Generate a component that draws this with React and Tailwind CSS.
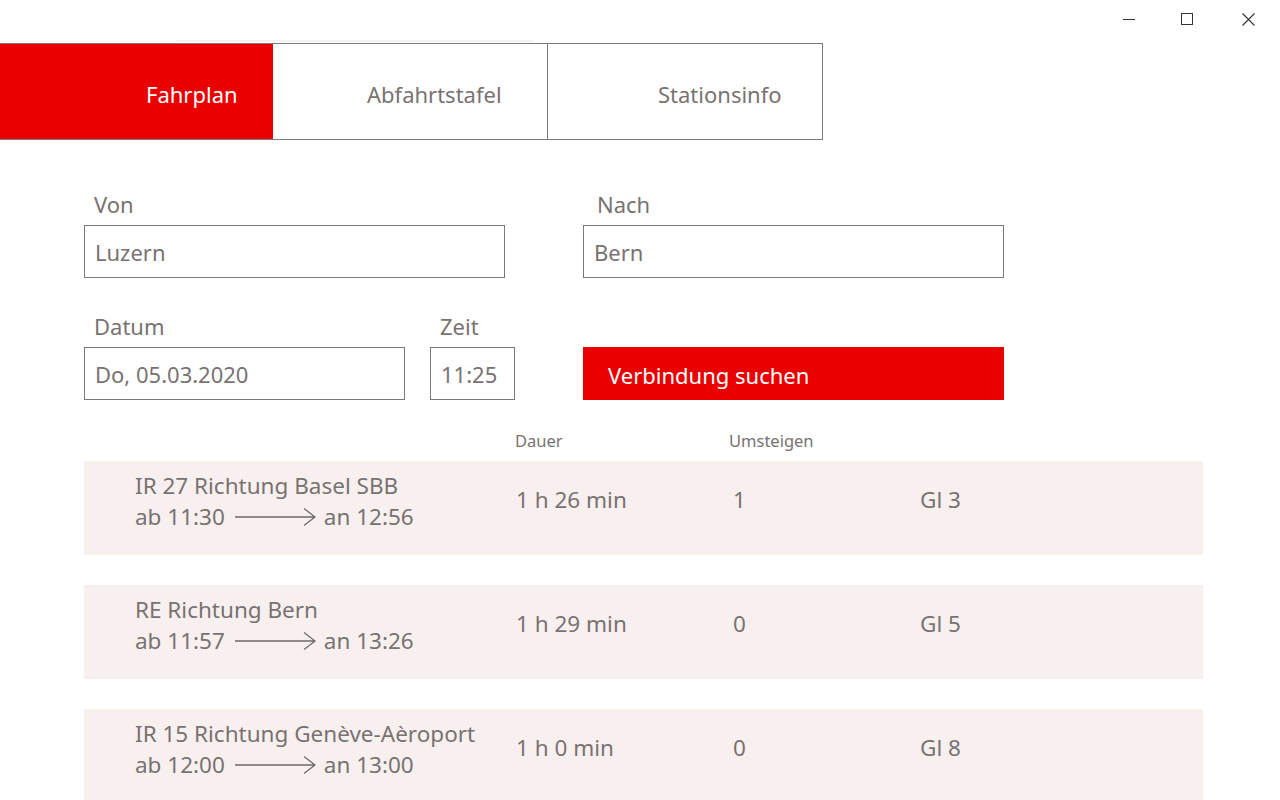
import { useState } from 'react';

const connections = [
  { line: 'IR 27 Richtung Basel SBB', dep: '11:30', arr: '12:56', duration: '1 h 26 min', changes: '1', track: 'Gl 3' },
  { line: 'RE Richtung Bern', dep: '11:57', arr: '13:26', duration: '1 h 29 min', changes: '0', track: 'Gl 5' },
  { line: 'IR 15 Richtung Genève-Aèroport', dep: '12:00', arr: '13:00', duration: '1 h 0 min', changes: '0', track: 'Gl 8' },
];

function Arrow() {
  return (
    <svg width="81" height="22" viewBox="0 0 81 22" className="ml-[10px] mr-[8px] shrink-0">
      <path d="M0 11 H80 M69 2.5 L80 11 L69 19.5" fill="none" stroke="#6f6a6a" strokeWidth="1.3" />
    </svg>
  );
}

function Field({ label, value, width, labelPad = 'pl-[10px]' }) {
  return (
    <div className={width}>
      <div className={`h-[30px] leading-[30px] text-[22px] ${labelPad}`}>{label}</div>
      <div className="mt-[6px] h-[53px] border border-[#7a7a7a] flex items-center px-[10px] pt-[2px] text-[22px] whitespace-nowrap">
        {value}
      </div>
    </div>
  );
}

export default function App() {
  const [tab, setTab] = useState('Fahrplan');
  const tabs = [
    { name: 'Fahrplan', pad: 'pl-[146px]' },
    { name: 'Abfahrtstafel', pad: 'pl-[94px]' },
    { name: 'Stationsinfo', pad: 'pl-[110px]' },
  ];

  return (
    <div
      className="w-[1280px] h-[800px] overflow-hidden bg-white text-[#787272]"
      style={{ fontFamily: '"Noto Sans", "Open Sans", sans-serif' }}
    >
      {/* title bar */}
      <div className="h-[43px] flex">
        <div className="ml-[176px] mt-[40px] w-[357px] h-[2px] bg-[#f2f2f2]"></div>
        <div className="ml-auto flex h-[38px] items-center text-[#222]">
          <button className="w-[58px] h-[38px] flex items-center justify-center">
            <svg width="12" height="12" viewBox="0 0 12 12"><path d="M0 6.5 H12" stroke="#333" strokeWidth="1" /></svg>
          </button>
          <button className="w-[58px] h-[38px] flex items-center justify-center">
            <svg width="12" height="12" viewBox="0 0 12 12"><rect x="0.5" y="0.5" width="11" height="11" fill="none" stroke="#333" strokeWidth="1" /></svg>
          </button>
          <button className="w-[64px] h-[38px] flex items-center justify-center">
            <svg width="13" height="13" viewBox="0 0 13 13"><path d="M0.5 0.5 L12.5 12.5 M12.5 0.5 L0.5 12.5" stroke="#333" strokeWidth="1.1" /></svg>
          </button>
        </div>
      </div>

      {/* tabs */}
      <div className="flex w-[823px] h-[97px] border-t border-b border-[#7a7a7a]">
        {tabs.map((t, i) => (
          <button
            key={t.name}
            onClick={() => setTab(t.name)}
            className={`${i === 0 ? 'w-[273px]' : 'w-[275px]'} h-full flex items-center pt-[6px] text-[22px] ${t.pad} ${
              tab === t.name ? 'bg-[#eb0000] text-white' : 'text-[#787272]'
            } ${i > 0 ? 'border-r border-[#7a7a7a]' : ''}`}
          >
            {t.name}
          </button>
        ))}
      </div>

      {/* form */}
      <div className="ml-[84px] mt-[49px]">
        <div className="flex gap-[78px]">
          <Field label="Von" value="Luzern" width="w-[421px]" />
          <Field label="Nach" value="Bern" width="w-[421px]" labelPad="pl-[14px]" />
        </div>
        <div className="flex mt-[33px] items-end">
          <Field label="Datum" value="Do, 05.03.2020" width="w-[321px]" />
          <Field label="Zeit" value="11:25" width="w-[85px] ml-[25px]" />
          <button className="ml-[68px] w-[421px] h-[53px] bg-[#eb0000] text-white text-[22px] text-left pl-[25px] pt-[3px]">
            Verbindung suchen
          </button>
        </div>
      </div>

      {/* results */}
      <div className="ml-[84px] w-[1119px] mt-[31px]">
        <div className="flex h-[20px] leading-[20px] text-[16.5px] mb-[10px]">
          <div className="ml-[431px] w-[214px]">Dauer</div>
          <div>Umsteigen</div>
        </div>
        <div className="flex flex-col gap-[30px]">
          {connections.map((c) => (
            <div key={c.line} className="h-[94px] bg-[#f8f0ef] flex text-[22.5px] leading-[31px] whitespace-nowrap">
              <div className="w-[432px] pl-[51px] pt-[9px]">
                <div>{c.line}</div>
                <div className="flex items-center">
                  <span>ab {c.dep}</span>
                  <Arrow />
                  <span>an {c.arr}</span>
                </div>
              </div>
              <div className="w-[217px] pt-[23px]">{c.duration}</div>
              <div className="w-[187px] pt-[23px]">{c.changes}</div>
              <div className="pt-[23px]">{c.track}</div>
            </div>
          ))}
        </div>
      </div>
    </div>
  );
}
